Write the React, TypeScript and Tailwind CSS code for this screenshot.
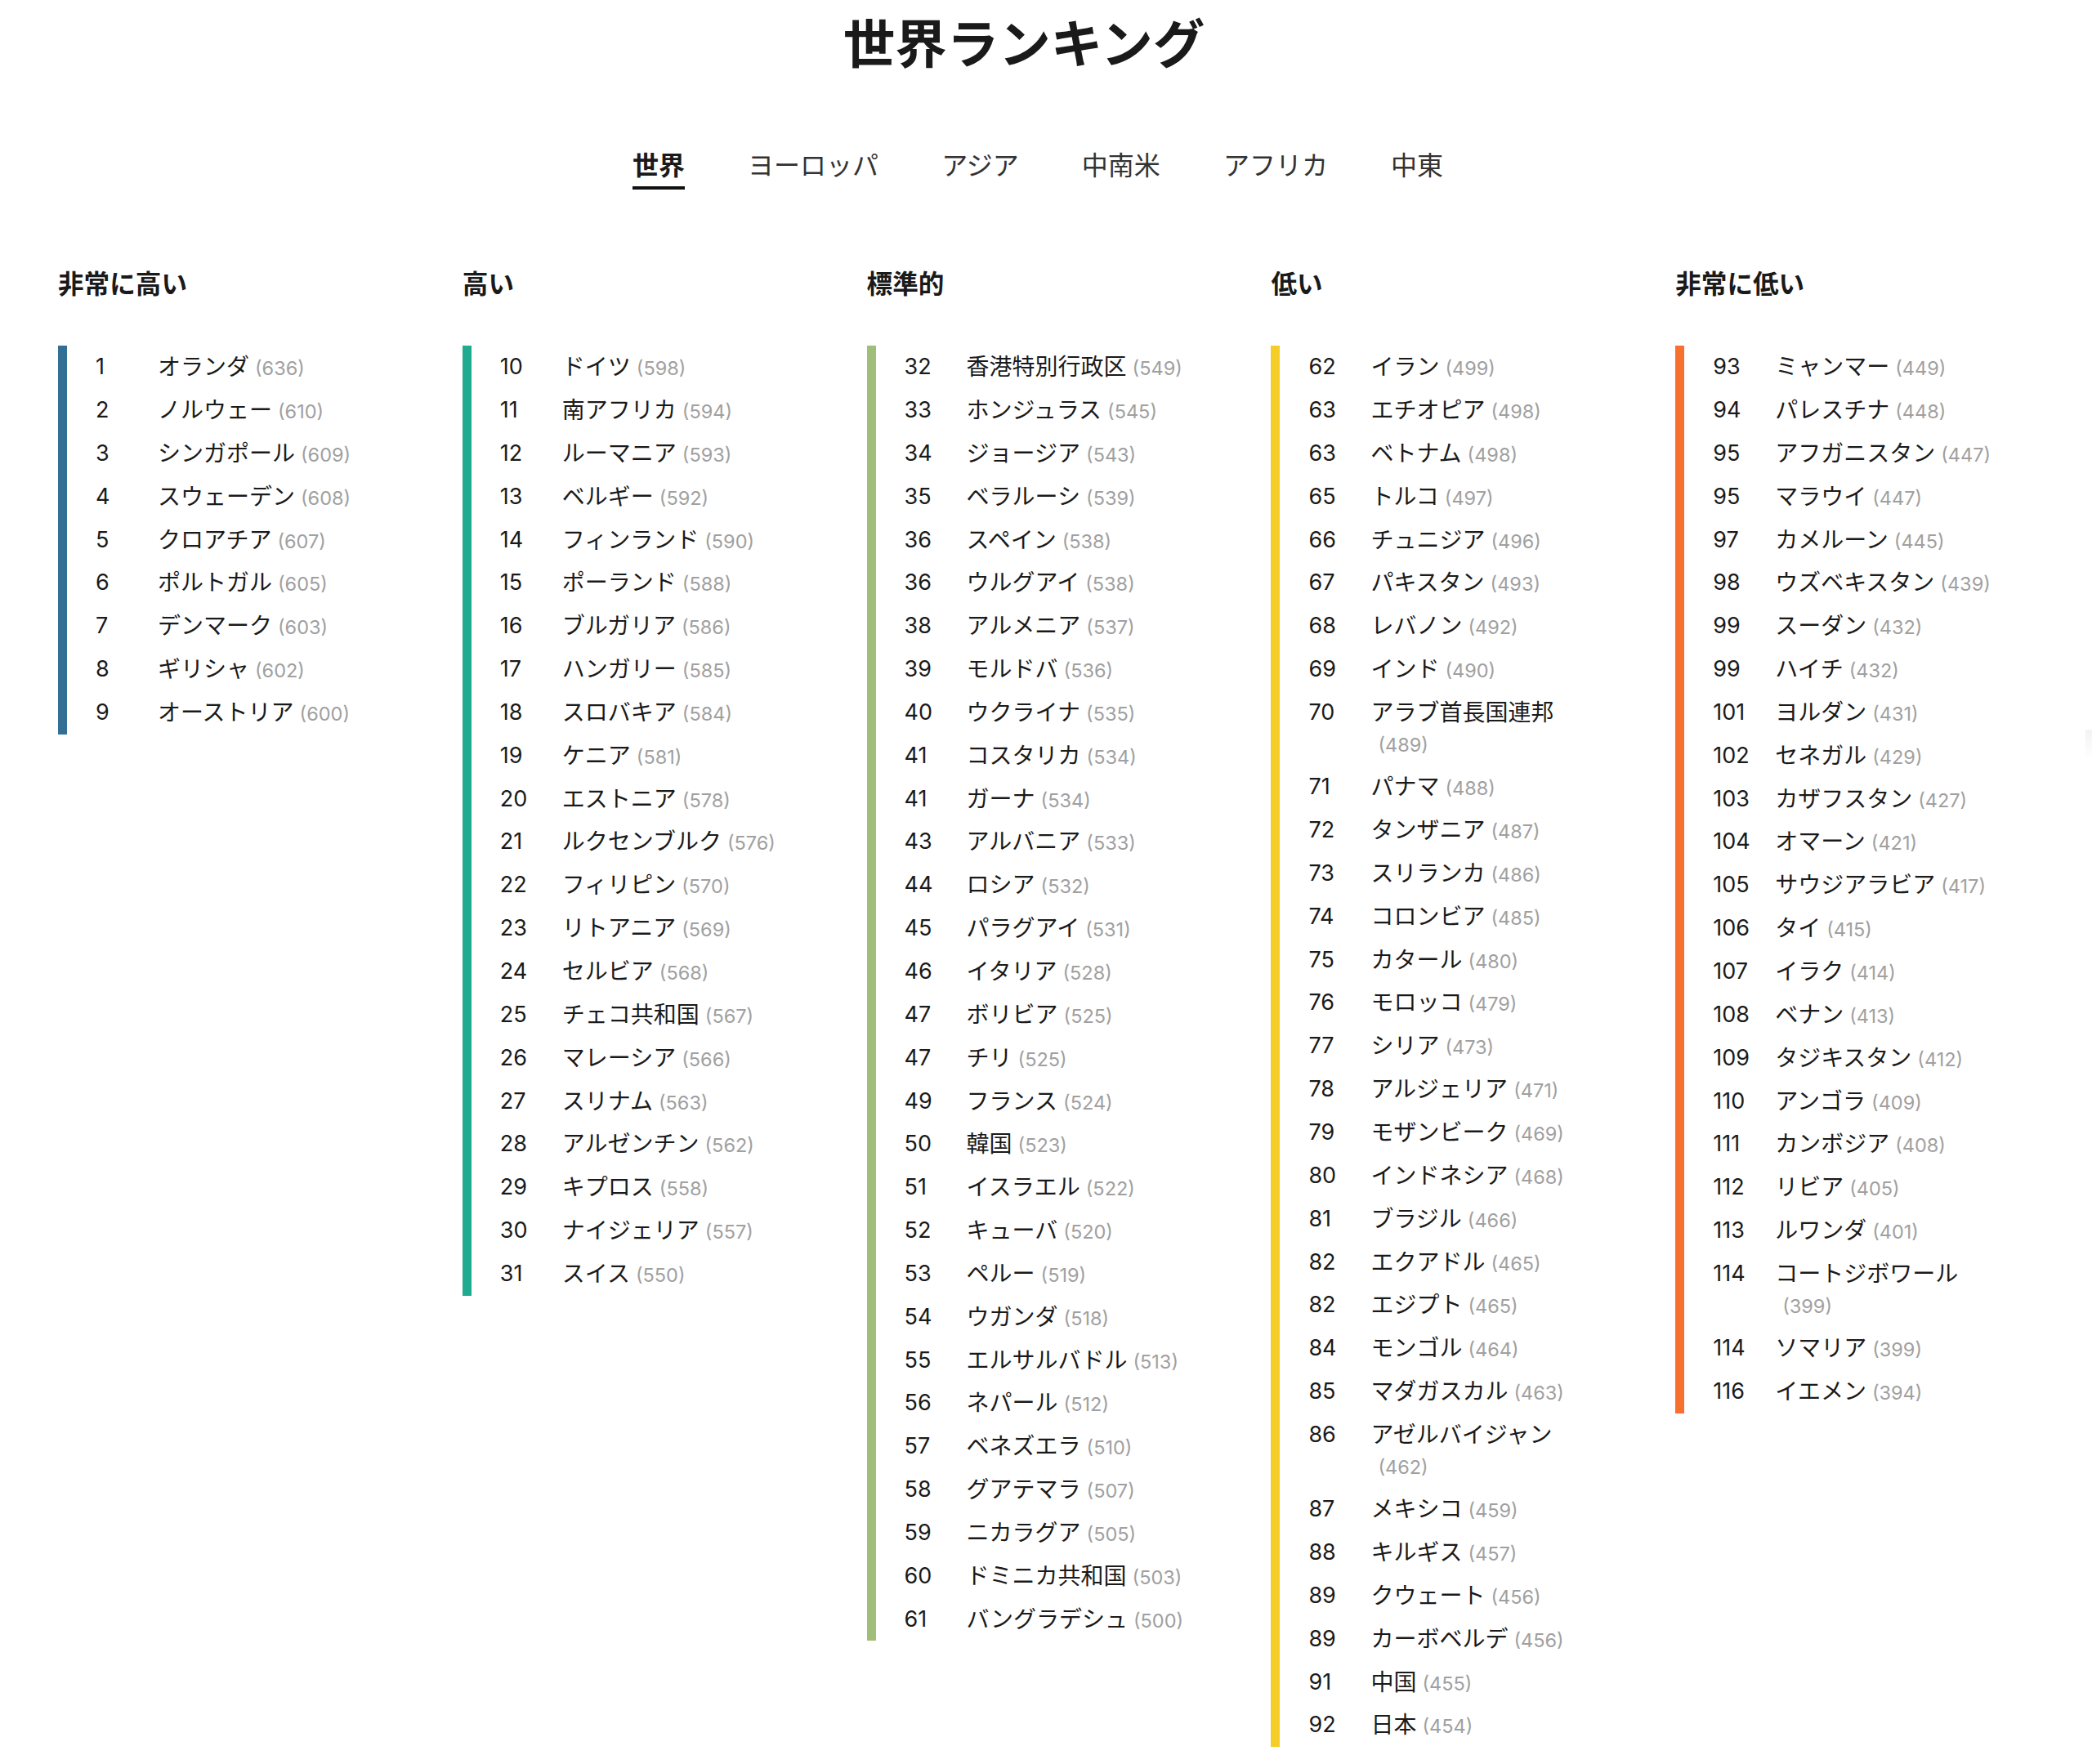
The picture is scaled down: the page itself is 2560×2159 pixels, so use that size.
import React from "react";

type Row = [number, string, number];

interface Group {
  title: string;
  barClass: string;
  rows: Row[];
}

const tabs = ["世界", "ヨーロッパ", "アジア", "中南米", "アフリカ", "中東"];

const groups: Group[] = [
  {
    title: "非常に高い",
    barClass: "border-[#336f94]",
    rows: [
      [1, "オランダ", 636],
      [2, "ノルウェー", 610],
      [3, "シンガポール", 609],
      [4, "スウェーデン", 608],
      [5, "クロアチア", 607],
      [6, "ポルトガル", 605],
      [7, "デンマーク", 603],
      [8, "ギリシャ", 602],
      [9, "オーストリア", 600],
    ],
  },
  {
    title: "高い",
    barClass: "border-[#1fab8f]",
    rows: [
      [10, "ドイツ", 598],
      [11, "南アフリカ", 594],
      [12, "ルーマニア", 593],
      [13, "ベルギー", 592],
      [14, "フィンランド", 590],
      [15, "ポーランド", 588],
      [16, "ブルガリア", 586],
      [17, "ハンガリー", 585],
      [18, "スロバキア", 584],
      [19, "ケニア", 581],
      [20, "エストニア", 578],
      [21, "ルクセンブルク", 576],
      [22, "フィリピン", 570],
      [23, "リトアニア", 569],
      [24, "セルビア", 568],
      [25, "チェコ共和国", 567],
      [26, "マレーシア", 566],
      [27, "スリナム", 563],
      [28, "アルゼンチン", 562],
      [29, "キプロス", 558],
      [30, "ナイジェリア", 557],
      [31, "スイス", 550],
    ],
  },
  {
    title: "標準的",
    barClass: "border-[#a1bd7a]",
    rows: [
      [32, "香港特別行政区", 549],
      [33, "ホンジュラス", 545],
      [34, "ジョージア", 543],
      [35, "ベラルーシ", 539],
      [36, "スペイン", 538],
      [36, "ウルグアイ", 538],
      [38, "アルメニア", 537],
      [39, "モルドバ", 536],
      [40, "ウクライナ", 535],
      [41, "コスタリカ", 534],
      [41, "ガーナ", 534],
      [43, "アルバニア", 533],
      [44, "ロシア", 532],
      [45, "パラグアイ", 531],
      [46, "イタリア", 528],
      [47, "ボリビア", 525],
      [47, "チリ", 525],
      [49, "フランス", 524],
      [50, "韓国", 523],
      [51, "イスラエル", 522],
      [52, "キューバ", 520],
      [53, "ペルー", 519],
      [54, "ウガンダ", 518],
      [55, "エルサルバドル", 513],
      [56, "ネパール", 512],
      [57, "ベネズエラ", 510],
      [58, "グアテマラ", 507],
      [59, "ニカラグア", 505],
      [60, "ドミニカ共和国", 503],
      [61, "バングラデシュ", 500],
    ],
  },
  {
    title: "低い",
    barClass: "border-[#f4cd26]",
    rows: [
      [62, "イラン", 499],
      [63, "エチオピア", 498],
      [63, "ベトナム", 498],
      [65, "トルコ", 497],
      [66, "チュニジア", 496],
      [67, "パキスタン", 493],
      [68, "レバノン", 492],
      [69, "インド", 490],
      [70, "アラブ首長国連邦", 489],
      [71, "パナマ", 488],
      [72, "タンザニア", 487],
      [73, "スリランカ", 486],
      [74, "コロンビア", 485],
      [75, "カタール", 480],
      [76, "モロッコ", 479],
      [77, "シリア", 473],
      [78, "アルジェリア", 471],
      [79, "モザンビーク", 469],
      [80, "インドネシア", 468],
      [81, "ブラジル", 466],
      [82, "エクアドル", 465],
      [82, "エジプト", 465],
      [84, "モンゴル", 464],
      [85, "マダガスカル", 463],
      [86, "アゼルバイジャン", 462],
      [87, "メキシコ", 459],
      [88, "キルギス", 457],
      [89, "クウェート", 456],
      [89, "カーボベルデ", 456],
      [91, "中国", 455],
      [92, "日本", 454],
    ],
  },
  {
    title: "非常に低い",
    barClass: "border-[#f6702e]",
    rows: [
      [93, "ミャンマー", 449],
      [94, "パレスチナ", 448],
      [95, "アフガニスタン", 447],
      [95, "マラウイ", 447],
      [97, "カメルーン", 445],
      [98, "ウズベキスタン", 439],
      [99, "スーダン", 432],
      [99, "ハイチ", 432],
      [101, "ヨルダン", 431],
      [102, "セネガル", 429],
      [103, "カザフスタン", 427],
      [104, "オマーン", 421],
      [105, "サウジアラビア", 417],
      [106, "タイ", 415],
      [107, "イラク", 414],
      [108, "ベナン", 413],
      [109, "タジキスタン", 412],
      [110, "アンゴラ", 409],
      [111, "カンボジア", 408],
      [112, "リビア", 405],
      [113, "ルワンダ", 401],
      [114, "コートジボワール", 399],
      [114, "ソマリア", 399],
      [116, "イエメン", 394],
    ],
  },
];

const App: React.FC = () => {
  return (
    <div className="relative w-[2560px] h-[2159px] bg-white text-[#1a1a1a] font-['Inter','Noto_Sans_CJK_JP',sans-serif] overflow-hidden">
      <h1 className="pt-[16px] pr-[54px] text-center text-[63.5px] leading-[76px] font-bold">世界ランキング</h1>

      <nav className="flex justify-center gap-[77px] mt-[91px] pr-[20px]">
        {tabs.map((tab, i) => (
          <div
            key={tab}
            className={
              i === 0
                ? "h-[49px] text-[32px] leading-[40px] font-bold border-b-[4px] border-[#111]"
                : "h-[49px] text-[32px] leading-[40px] text-[#333]"
            }
          >
            {tab}
          </div>
        ))}
      </nav>

      <div className="flex items-start gap-[10.8px] mt-[96px] pl-[71px]">
        {groups.map((g) => (
          <section key={g.title} className="w-[484px]">
            <h2 className="text-[31.6px] leading-[40px] font-bold">{g.title}</h2>
            <ul className={`mt-[55px] pl-[35px] border-l-[11px] ${g.barClass}`}>
              {g.rows.map(([rank, name, score], i) => (
                <li key={i} className="flex py-[7.18px] text-[28px] leading-[38.5px]">
                  <span className="w-[76px] shrink-0 text-[27px]">{rank}</span>
                  <span className="w-[275px]">
                    <span className="-mr-[2px]">{name}</span>
                    <span className="ml-[9px] text-[23.5px] leading-none text-[#a0a0a0]">({score})</span>
                  </span>
                </li>
              ))}
            </ul>
          </section>
        ))}
      </div>

      <div className="absolute right-0 top-[893px] w-[8px] h-[37px] bg-gradient-to-b from-[#f3f3f3] to-white" />
    </div>
  );
};

export default App;
